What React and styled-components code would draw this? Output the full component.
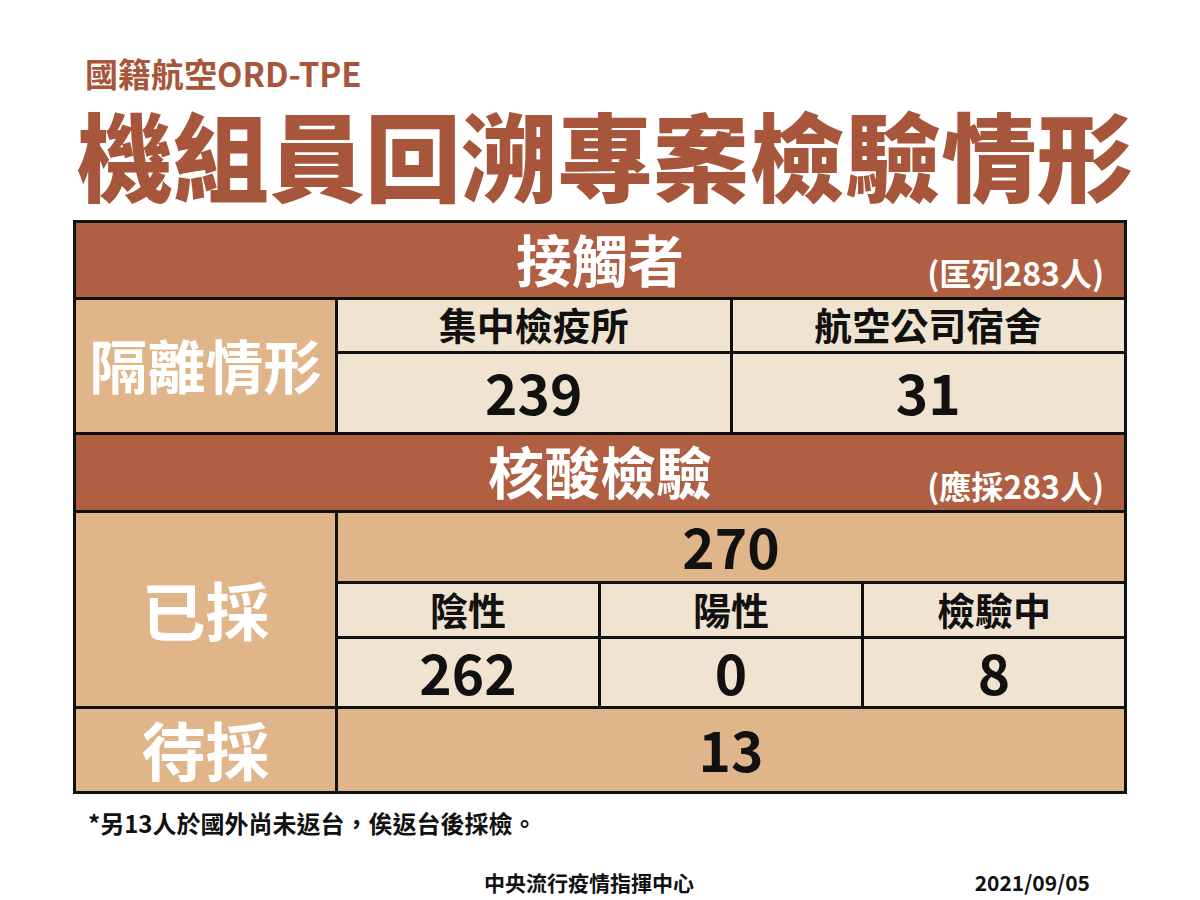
import React from 'react';
import styled, { createGlobalStyle } from 'styled-components';

const GlobalStyle = createGlobalStyle`
  html, body {
    margin: 0;
    padding: 0;
    background: #ffffff;
  }
  body {
    font-family: "Noto Sans CJK TC", "Noto Sans", sans-serif;
  }
`;

const Page = styled.div`
  width: 1200px;
  height: 900px;
  box-sizing: border-box;
  padding: 49px 73px 0;
  display: flex;
  flex-direction: column;
`;

const Kicker = styled.div`
  padding-left: 12px;
  font-size: 33px;
  font-weight: 700;
  line-height: 48px;
  color: #a8563b;
`;

const Title = styled.h1`
  margin: 8px 0 0 4px;
  font-size: 96px;
  font-weight: 900;
  line-height: 96px;
  color: #a8563b;
  white-space: nowrap;
`;

const Table = styled.div`
  margin-top: 19px;
  width: 1054px;
  box-sizing: border-box;
  border: 3px solid #111;
  background: #111;
  display: flex;
  flex-direction: column;
  gap: 3px;
`;

const SectionHead = styled.div`
  height: ${p => p.$h}px;
  background: #b05f43;
  color: #fff;
  display: grid;
  grid-template-columns: 1fr auto 1fr;
  align-items: center;
`;

const HeadTitle = styled.div`
  grid-column: 2;
  font-size: 56px;
  font-weight: 700;
  line-height: 1;
  padding-bottom: 5px;
`;

const HeadNote = styled.div`
  grid-column: 3;
  justify-self: end;
  align-self: end;
  padding: 0 20px 9px 0;
  font-size: 32px;
  font-weight: 700;
  line-height: 1;
`;

const Section = styled.div`
  display: grid;
  grid-template-columns: 259px 1fr;
  gap: 3px;
`;

const SideLabel = styled.div`
  background: #e0b589;
  color: #fff;
  font-size: ${p => p.$size}px;
  font-weight: 700;
  line-height: 1;
  display: flex;
  align-items: center;
  justify-content: center;
  padding-bottom: 4px;
`;

const Cells = styled.div`
  display: grid;
  grid-template-columns: repeat(${p => p.$cols}, 1fr);
  grid-template-rows: ${p => p.$rows};
  gap: 3px;
`;

const Cell = styled.div`
  grid-column: span ${p => p.$span || 1};
  background: ${p => (p.$tan ? '#e0b589' : '#f0e3d0')};
  color: #111;
  font-size: ${p => (p.$num ? 55 : 38)}px;
  font-weight: 700;
  line-height: 1;
  display: flex;
  align-items: center;
  justify-content: center;
  padding-bottom: 3px;
`;

const Note = styled.div`
  margin-top: 17px;
  padding-left: 15px;
  font-size: 24px;
  font-weight: 700;
  line-height: 24px;
  color: #111;
`;

const Footer = styled.div`
  margin-top: 36px;
  padding: 0 37px 0 411px;
  display: flex;
  justify-content: space-between;
  font-size: 21px;
  font-weight: 700;
  line-height: 22px;
  color: #111;
`;

export default function App() {
  return (
    <>
      <GlobalStyle />
      <Page>
        <Kicker>國籍航空ORD-TPE</Kicker>
        <Title>機組員回溯專案檢驗情形</Title>

        <Table>
          <SectionHead $h={74}>
            <HeadTitle>接觸者</HeadTitle>
            <HeadNote>(匡列283人)</HeadNote>
          </SectionHead>
          <Section>
            <SideLabel $size={58}>隔離情形</SideLabel>
            <Cells $cols={2} $rows="51px 78px">
              <Cell>集中檢疫所</Cell>
              <Cell>航空公司宿舍</Cell>
              <Cell $num>239</Cell>
              <Cell $num>31</Cell>
            </Cells>
          </Section>

          <SectionHead $h={75}>
            <HeadTitle>核酸檢驗</HeadTitle>
            <HeadNote>(應採283人)</HeadNote>
          </SectionHead>
          <Section>
            <SideLabel $size={64}>已採</SideLabel>
            <Cells $cols={3} $rows="68px 52px 67px">
              <Cell $tan $num $span={3}>270</Cell>
              <Cell>陰性</Cell>
              <Cell>陽性</Cell>
              <Cell>檢驗中</Cell>
              <Cell $num>262</Cell>
              <Cell $num>0</Cell>
              <Cell $num>8</Cell>
            </Cells>
          </Section>
          <Section>
            <SideLabel $size={64}>待採</SideLabel>
            <Cells $cols={1} $rows="82px">
              <Cell $tan $num>13</Cell>
            </Cells>
          </Section>
        </Table>

        <Note>*另13人於國外尚未返台，俟返台後採檢。</Note>

        <Footer>
          <span>中央流行疫情指揮中心</span>
          <span>2021/09/05</span>
        </Footer>
      </Page>
    </>
  );
}
